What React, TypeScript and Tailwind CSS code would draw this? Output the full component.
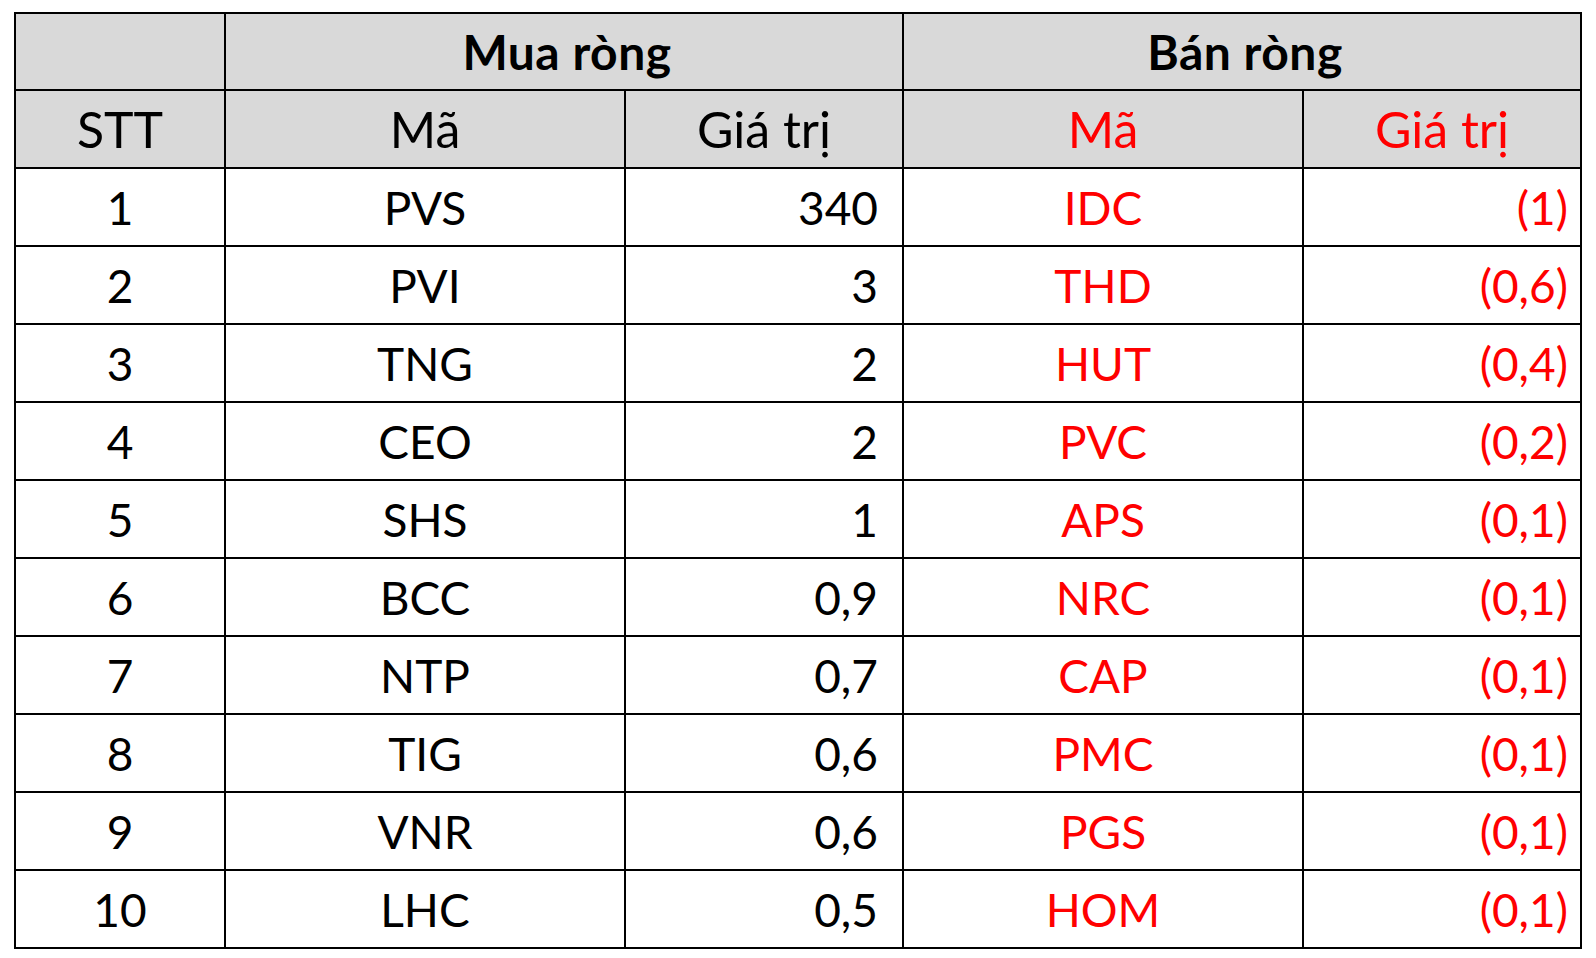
const rows = [
  { stt: 1, buy: 'PVS', buyVal: '340', sell: 'IDC', sellVal: '(1)' },
  { stt: 2, buy: 'PVI', buyVal: '3', sell: 'THD', sellVal: '(0,6)' },
  { stt: 3, buy: 'TNG', buyVal: '2', sell: 'HUT', sellVal: '(0,4)' },
  { stt: 4, buy: 'CEO', buyVal: '2', sell: 'PVC', sellVal: '(0,2)' },
  { stt: 5, buy: 'SHS', buyVal: '1', sell: 'APS', sellVal: '(0,1)' },
  { stt: 6, buy: 'BCC', buyVal: '0,9', sell: 'NRC', sellVal: '(0,1)' },
  { stt: 7, buy: 'NTP', buyVal: '0,7', sell: 'CAP', sellVal: '(0,1)' },
  { stt: 8, buy: 'TIG', buyVal: '0,6', sell: 'PMC', sellVal: '(0,1)' },
  { stt: 9, buy: 'VNR', buyVal: '0,6', sell: 'PGS', sellVal: '(0,1)' },
  { stt: 10, buy: 'LHC', buyVal: '0,5', sell: 'HOM', sellVal: '(0,1)' },
]

export default function App() {
  return (
    <div className="min-h-screen bg-white pl-[14px] pt-[12px] font-['Lato',sans-serif]">
      <div className="grid w-[1568px] grid-cols-[208px_398px_276px_398px_276px] grid-rows-[75px_76px_repeat(10,76px)] gap-[2px] bg-black p-[2px]">
        {/* header row 1 */}
        <div className="bg-[#d9d9d9]" />
        <div className="col-span-2 flex items-center justify-center bg-[#d9d9d9] pl-[6px] text-[48px] font-bold tracking-[0.5px] text-black">Mua ròng</div>
        <div className="col-span-2 flex items-center justify-center bg-[#d9d9d9] pl-[6px] text-[48px] font-bold tracking-[0.5px] text-black">Bán ròng</div>

        {/* header row 2 */}
        <div className="flex items-center justify-center bg-[#d9d9d9] text-[50px] text-black">STT</div>
        <div className="flex items-center justify-center bg-[#d9d9d9] text-[50px] text-black">Mã</div>
        <div className="flex items-center justify-center bg-[#d9d9d9] text-[50px] text-black">Giá trị</div>
        <div className="flex items-center justify-center bg-[#d9d9d9] text-[50px] text-[#ff0000]">Mã</div>
        <div className="flex items-center justify-center bg-[#d9d9d9] text-[50px] text-[#ff0000]">Giá trị</div>

        {rows.map((r) => (
          <Row key={r.stt} {...r} />
        ))}
      </div>
    </div>
  )
}

interface RowProps {
  stt: number
  buy: string
  buyVal: string
  sell: string
  sellVal: string
}

function Row({ stt, buy, buyVal, sell, sellVal }: RowProps) {
  return (
    <>
      <div className="flex items-center justify-center bg-white text-[46px] text-black">{stt}</div>
      <div className="flex items-center justify-center bg-white text-[46px] text-black">{buy}</div>
      <div className="flex items-center justify-end bg-white pr-[24px] text-[46px] text-black">{buyVal}</div>
      <div className="flex items-center justify-center bg-white text-[46px] text-[#ff0000]">{sell}</div>
      <div className="flex items-center justify-end bg-white pr-[12px] text-[46px] text-[#ff0000]">{sellVal}</div>
    </>
  )
}
